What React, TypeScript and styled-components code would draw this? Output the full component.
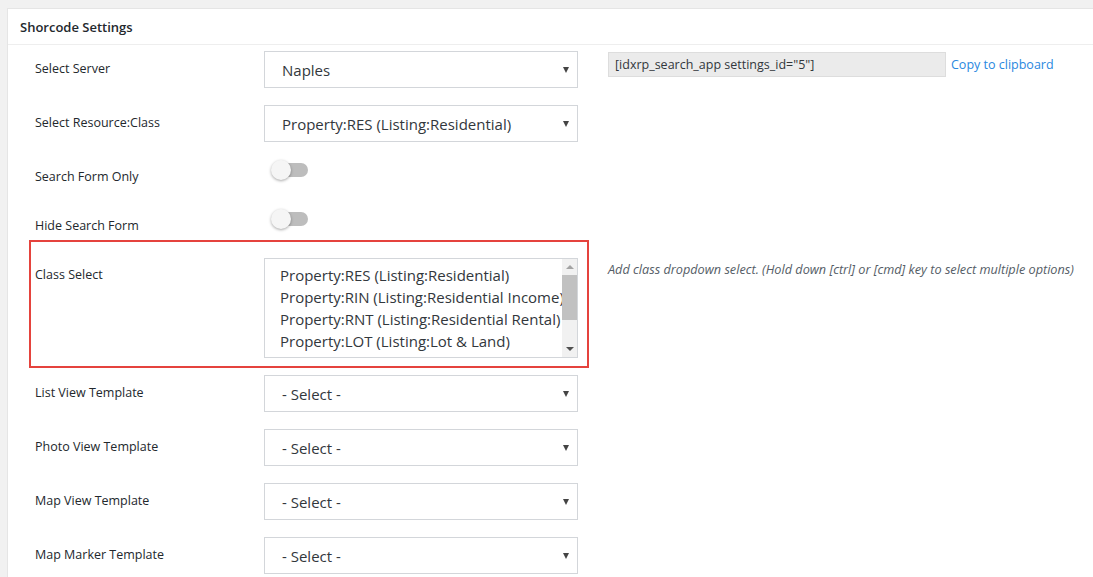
import React from "react";
import styled, { createGlobalStyle } from "styled-components";

const Global = createGlobalStyle`
  html, body { margin: 0; padding: 0; background: #f1f1f1; overflow: hidden; }
  body { font-family: "Open Sans", "Noto Sans", Arial, sans-serif; color: #23282d; }
`;

const Page = styled.div`
  padding: 8px 0 0 7px;
  height: 577px;
  box-sizing: border-box;
  overflow: hidden;
`;

const Card = styled.section`
  background: #fff;
  border: 1px solid #e5e5e5;
  border-right: none;
  margin-right: -20px;
  height: 640px;
`;

const Header = styled.h2`
  margin: 0;
  height: 35px;
  border-bottom: 1px solid #eeeeee;
  padding-left: 12px;
  display: flex;
  align-items: center;
  font-size: 13px;
  font-weight: 600;
  color: #23282d;
`;

const Row = styled.div<{ $h: number }>`
  display: flex;
  align-items: flex-start;
  height: ${(p) => p.$h}px;
  padding-left: 21px;
`;

const Field = styled.div<{ $highlight?: boolean }>`
  display: flex;
  align-items: flex-start;
  width: 560px;
  height: 100%;
  box-sizing: border-box;
  border: 2px solid ${(p) => (p.$highlight ? "#e5433d" : "transparent")};
  ${(p) => (p.$highlight ? "" : "border-top: none; border-bottom: none;")}
  padding-left: 4px;
`;

const Label = styled.div<{ $top: number }>`
  width: 229px;
  flex: none;
  padding-top: ${(p) => p.$top}px;
  font-size: 12.5px;
  line-height: 18px;
  color: #23282d;
`;

const Control = styled.div<{ $top: number }>`
  width: 314px;
  flex: none;
  padding-top: ${(p) => p.$top}px;
`;

const Extra = styled.div<{ $top: number }>`
  margin-left: 19px;
  padding-top: ${(p) => p.$top}px;
  display: flex;
  align-items: center;
  white-space: nowrap;
`;

const SelectBox = styled.div`
  height: 37px;
  box-sizing: border-box;
  border: 1px solid #d3d6da;
  display: flex;
  align-items: center;
  justify-content: space-between;
  padding: 0 8px 0 17px;
  font-size: 15px;
  color: #32373c;
  background: #fff;
`;

const Caret = styled.span`
  width: 0;
  height: 0;
  border-left: 3.5px solid transparent;
  border-right: 3.5px solid transparent;
  border-top: 6px solid #444;
  margin-top: 1px;
`;

const ShortcodeInput = styled.div`
  width: 338px;
  height: 25px;
  box-sizing: border-box;
  background: #ebebeb;
  border: 1px solid #dddddd;
  font-size: 12.5px;
  color: #32373c;
  padding-left: 6px;
  display: flex;
  align-items: center;
`;

const CopyLink = styled.a`
  margin-left: 5px;
  font-size: 12.5px;
  color: #2a88e0;
  text-decoration: none;
`;

const HelpText = styled.p`
  margin: 0;
  font-size: 12.7px;
  font-style: italic;
  color: #555d66;
  line-height: 18px;
`;

const Toggle = styled.div`
  position: relative;
  width: 38px;
  height: 20px;
  margin-left: 7px;
`;

const Track = styled.span`
  position: absolute;
  left: 9px;
  top: 3px;
  width: 28px;
  height: 14px;
  border-radius: 7px;
  background: #bdbdbd;
`;

const Knob = styled.span`
  position: absolute;
  left: 0;
  top: 0;
  width: 20px;
  height: 20px;
  border-radius: 50%;
  background: #f5f5f5;
  box-shadow: 0 1px 3px rgba(0, 0, 0, 0.35);
`;

const ListBox = styled.div`
  height: 100px;
  box-sizing: border-box;
  border: 1px solid #d3d6da;
  display: flex;
  background: #fff;
`;

const Options = styled.div`
  flex: 1;
  overflow: hidden;
  padding: 5px 0 0 15px;
  font-size: 15px;
  line-height: 22px;
  color: #32373c;
  white-space: nowrap;
`;

const Scrollbar = styled.div`
  width: 15px;
  flex: none;
  background: #f1f1f1;
  display: flex;
  flex-direction: column;
  align-items: center;
`;

const ScrollArrow = styled.span<{ $up?: boolean; $color: string }>`
  width: 0;
  height: 0;
  border-left: 4px solid transparent;
  border-right: 4px solid transparent;
  ${(p) =>
    p.$up
      ? `border-bottom: 4px solid ${p.$color}; margin-top: 6px;`
      : `border-top: 4px solid ${p.$color}; margin-top: auto; margin-bottom: 6px;`}
`;

const Thumb = styled.span`
  width: 100%;
  height: 45px;
  margin-top: 6px;
  background: #c1c1c1;
`;

const Select = ({ value }: { value: string }) => (
  <SelectBox>
    <span>{value}</span>
    <Caret />
  </SelectBox>
);

const Switch = () => (
  <Toggle>
    <Track />
    <Knob />
  </Toggle>
);

const classOptions = [
  "Property:RES (Listing:Residential)",
  "Property:RIN (Listing:Residential Income)",
  "Property:RNT (Listing:Residential Rental)",
  "Property:LOT (Listing:Lot & Land)",
  "Property:COM (Listing:Commercial Sale)",
];

export default function App() {
  return (
    <>
      <Global />
      <Page>
        <Card>
          <Header>Shorcode Settings</Header>

          <Row $h={54}>
            <Field>
              <Label $top={15}>Select Server</Label>
              <Control $top={6}>
                <Select value="Naples" />
              </Control>
            </Field>
            <Extra $top={7}>
              <ShortcodeInput>[idxrp_search_app settings_id="5"]</ShortcodeInput>
              <CopyLink href="#">Copy to clipboard</CopyLink>
            </Extra>
          </Row>

          <Row $h={54}>
            <Field>
              <Label $top={15}>Select Resource:Class</Label>
              <Control $top={6}>
                <Select value="Property:RES (Listing:Residential)" />
              </Control>
            </Field>
          </Row>

          <Row $h={49}>
            <Field>
              <Label $top={15}>Search Form Only</Label>
              <Control $top={7}>
                <Switch />
              </Control>
            </Field>
          </Row>

          <Row $h={38}>
            <Field>
              <Label $top={15}>Hide Search Form</Label>
              <Control $top={7}>
                <Switch />
              </Control>
            </Field>
          </Row>

          <Row $h={128}>
            <Field $highlight>
              <Label $top={24}>Class Select</Label>
              <Control $top={16}>
                <ListBox>
                  <Options>
                    {classOptions.map((o) => (
                      <div key={o}>{o}</div>
                    ))}
                  </Options>
                  <Scrollbar>
                    <ScrollArrow $up $color="#a3a3a3" />
                    <Thumb />
                    <ScrollArrow $color="#505050" />
                  </Scrollbar>
                </ListBox>
              </Control>
            </Field>
            <Extra $top={20}>
              <HelpText>
                Add class dropdown select. (Hold down [ctrl] or [cmd] key to select multiple options)
              </HelpText>
            </Extra>
          </Row>

          {["List View Template", "Photo View Template", "Map View Template", "Map Marker Template"].map(
            (label) => (
              <Row $h={54} key={label}>
                <Field>
                  <Label $top={16}>{label}</Label>
                  <Control $top={7}>
                    <Select value="- Select -" />
                  </Control>
                </Field>
              </Row>
            )
          )}
        </Card>
      </Page>
    </>
  );
}
